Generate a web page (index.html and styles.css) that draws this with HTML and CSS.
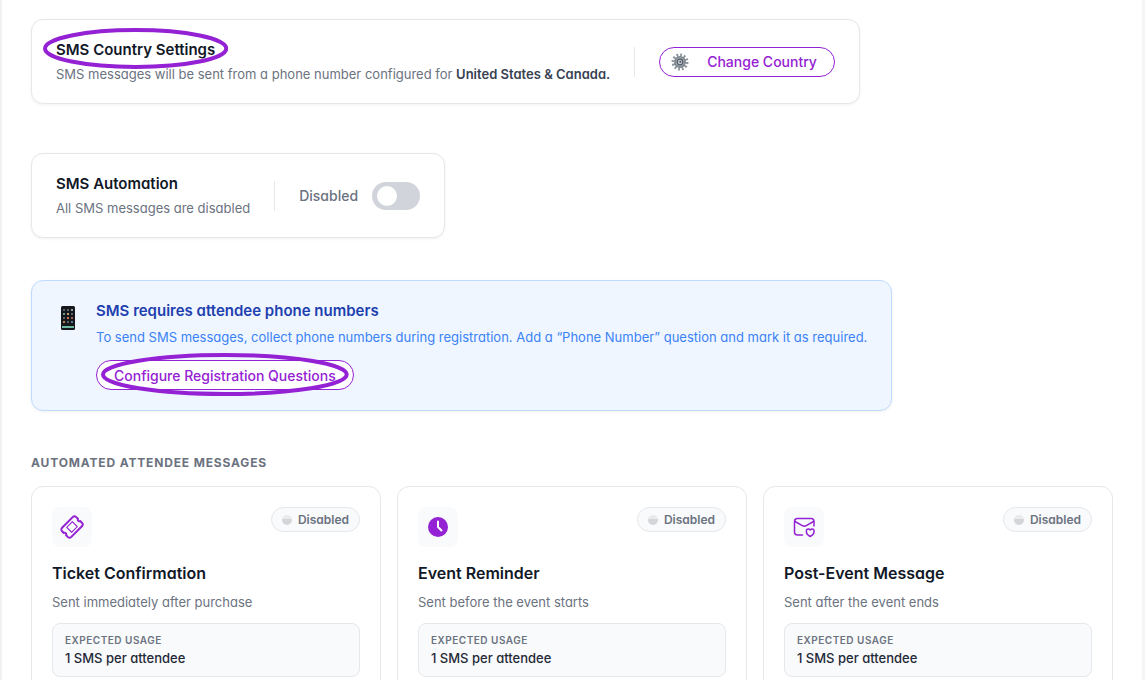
FILE: index.html
```html
<!DOCTYPE html>
<html lang="en">
  <head>
    <meta charset="UTF-8" />
    <title>SMS Settings</title>
    <link rel="stylesheet" href="styles.css">
  </head>
  <body>
    <main class="page">
      <section class="card country-card">
        <div>
          <h2 class="card-title">
            <span class="circled">SMS Country Settings
              <svg class="ring ring-title" viewBox="0 0 185 41" preserveAspectRatio="none" aria-hidden="true"><ellipse cx="92.5" cy="20.5" rx="90.5" ry="18.5" /></svg>
            </span>
          </h2>
          <p class="card-text">SMS messages will be sent from a phone number configured for <strong>United States &amp; Canada.</strong></p>
        </div>
        <div class="card-action">
          <button type="button" class="pill-btn country-btn">
            <svg class="gear" viewBox="0 0 18 18" aria-hidden="true">
              <circle cx="9" cy="9" r="7" fill="none" stroke="#8b939b" stroke-width="3" stroke-dasharray="1.8 1.86" />
              <circle cx="9" cy="9" r="5.2" fill="#a4abb2" stroke="#7d868e" stroke-width="1.6" />
              <circle cx="9" cy="9" r="2.8" fill="#c5cbd0" stroke="#545d65" stroke-width="1.2" />
              <circle cx="9.3" cy="8.7" r="1" fill="#454d55" />
            </svg>
            Change Country
          </button>
        </div>
      </section>

      <section class="card automation-card">
        <div>
          <h2 class="card-title">SMS Automation</h2>
          <p class="card-text">All SMS messages are disabled</p>
        </div>
        <div class="card-action">
          <label for="automation" class="switch-label">Disabled</label>
          <input type="checkbox" role="switch" id="automation" class="switch" />
        </div>
      </section>

      <section class="card notice">
        <svg class="phone" viewBox="0 0 16 24" aria-hidden="true">
          <rect x="1" y="0" width="14" height="24" rx="1.5" fill="#15171a" />
          <g fill="#56636b">
            <rect x="3" y="3" width="2" height="2" /><rect x="7" y="3" width="2" height="2" /><rect x="11" y="3" width="2" height="2" fill="#8fa3ad" />
            <rect x="3" y="7" width="2" height="2" fill="#6f9b8d" /><rect x="7" y="7" width="2" height="2" fill="#b9a27c" /><rect x="11" y="7" width="2" height="2" />
            <rect x="3" y="11" width="2" height="2" /><rect x="7" y="11" width="2" height="2" fill="#c9764e" /><rect x="11" y="11" width="2" height="2" fill="#a35b52" />
            <rect x="3" y="15" width="2" height="2" fill="#b7835a" /><rect x="7" y="15" width="2" height="2" /><rect x="11" y="15" width="2" height="2" fill="#5b7f9e" />
          </g>
          <rect x="2" y="20" width="12" height="2" fill="#6fb7a4" />
        </svg>
        <div>
          <h2 class="card-title">SMS requires attendee phone numbers</h2>
          <p class="card-text">To send SMS messages, collect phone numbers during registration. Add a “Phone Number” question and mark it as required.</p>
          <button type="button" class="pill-btn circled">
            Configure Registration Questions
            <svg class="ring ring-btn" viewBox="0 0 248 43" preserveAspectRatio="none" aria-hidden="true"><ellipse cx="124" cy="21.5" rx="122" ry="19.5" /></svg>
          </button>
        </div>
      </section>

      <h3 class="section-title">Automated Attendee Messages</h3>
      <div class="messages">
        <article class="message">
          <div class="message-head">
            <span class="icon-box">
              <svg viewBox="0 0 24 24" fill="none" stroke="#9421d3" stroke-linejoin="round" aria-hidden="true">
                <g transform="rotate(-45 12 12)">
                  <path stroke-width="2" d="M4.5 5.5h15a2.5 2.5 0 0 1 2.500 2.500v2.400a1.700 1.700 0 0 0 0 3.200V16a2.500 2.500 0 0 1-2.500 2.500h-15A2.500 2.500 0 0 1 2 16v-2.400a1.700 1.700 0 0 0 0-3.200V8a2.500 2.500 0 0 1 2.500-2.500z" />
                  <rect x="8" y="8.5" width="8" height="7" stroke-width="1.1" />
                </g>
              </svg>
            </span>
            <span class="badge"><i class="dot"></i>Disabled</span>
          </div>
          <h4 class="message-title">Ticket Confirmation</h4>
          <p class="message-text">Sent immediately after purchase</p>
          <div class="usage">
            <span class="usage-label">Expected usage</span>
            <span class="usage-value">1 SMS per attendee</span>
          </div>
        </article>
        <article class="message">
          <div class="message-head">
            <span class="icon-box">
              <svg viewBox="0 0 24 24" fill="none" aria-hidden="true">
                <circle cx="12" cy="12" r="10" fill="#9421d3" />
                <path d="M12 6.5V12l3.5 3.5" stroke="#fff" stroke-width="2" stroke-linecap="round" stroke-linejoin="round" />
              </svg>
            </span>
            <span class="badge"><i class="dot"></i>Disabled</span>
          </div>
          <h4 class="message-title">Event Reminder</h4>
          <p class="message-text">Sent before the event starts</p>
          <div class="usage">
            <span class="usage-label">Expected usage</span>
            <span class="usage-value">1 SMS per attendee</span>
          </div>
        </article>
        <article class="message">
          <div class="message-head">
            <span class="icon-box">
              <svg viewBox="0 0 24 24" fill="none" stroke="#9421d3" stroke-width="1.5" stroke-linecap="round" stroke-linejoin="round" aria-hidden="true">
                <path d="M10.5 20H5.5a3 3 0 0 1-3-3V6.5a3 3 0 0 1 3-3h13.500a3 3 0 0 1 3 3V11" />
                <path d="M3 6.5l7.300 4.200a4 4 0 0 0 4 0L21.5 6.5" />
                <path d="M18.2 21.5c-2.500-1.200-3.800-2.500-3.800-4.500v-1.200c0-1.100.8-1.800 1.800-1.800.8 0 1.500.3 2 .9.500-.6 1.200-.9 2-.9 1 0 1.800.7 1.800 1.800V17c0 2-1.300 3.300-3.800 4.500z" />
              </svg>
            </span>
            <span class="badge"><i class="dot"></i>Disabled</span>
          </div>
          <h4 class="message-title">Post-Event Message</h4>
          <p class="message-text">Sent after the event ends</p>
          <div class="usage">
            <span class="usage-label">Expected usage</span>
            <span class="usage-value">1 SMS per attendee</span>
          </div>
        </article>
      </div>
    </main>
  </body>
</html>
```
FILE: styles.css
```css
* {
  box-sizing: border-box;
}
html {
  overflow: hidden;
}
body {
  margin: 0;
  background-color: #fff;
  font-family: "Inter", sans-serif;
  font-feature-settings: "cv11";
  color: #111827;
}
h2,
h3,
h4,
p {
  margin: 0;
}
.page {
  display: flex;
  flex-direction: column;
  align-items: flex-start;
  min-height: 100vh;
  padding: 19px 29px 24px;
  border-left: 2px solid #f1f1f2;
  border-right: 3px solid #f5f5f6;
}
.card {
  display: flex;
  align-items: center;
  padding: 17px 24px;
  border: 1px solid #e5e7eb;
  border-radius: 12px;
  background: #fff;
  box-shadow: 0 1px 3px rgba(0, 0, 0, 0.06);
}
.card-title {
  font-size: 15px;
  font-weight: 600;
  line-height: 25px;
}
.card-text {
  font-size: 13px;
  line-height: 24px;
  color: #6b7280;
}
.card-text strong {
  font-weight: 600;
  color: #374151;
}
.card-action {
  display: flex;
  align-items: center;
  gap: 14px;
  height: 30px;
  margin-left: 24px;
  padding-left: 24px;
  border-left: 1px solid #e5e7eb;
}
.automation-card {
  margin-top: 49px;
}

/* Buttons */
.pill-btn {
  display: inline-flex;
  align-items: center;
  height: 30px;
  padding: 0 17px;
  border: 1px solid #9421d3;
  border-radius: 15px;
  background: #fff;
  font-family: inherit;
  font-size: 14px;
  font-weight: 500;
  color: #9421d3;
  white-space: nowrap;
  cursor: pointer;
}
.country-btn {
  gap: 18px;
  padding-left: 11px;
}
.gear {
  width: 18px;
  height: 18px;
}

/* Highlight rings */
.circled {
  position: relative;
}
.ring {
  position: absolute;
  fill: none;
  stroke: #9421d3;
  stroke-width: 4;
  pointer-events: none;
}
.ring-title {
  top: -12px;
  left: -13px;
  width: calc(100% + 26px);
  height: 41px;
}
.ring-btn {
  top: -8px;
  left: 4px;
  width: calc(100% - 8px);
  height: 43px;
}

/* Toggle */
.switch-label {
  font-size: 14px;
  font-weight: 500;
  color: #6b7280;
}
.switch {
  appearance: none;
  display: flex;
  align-items: center;
  width: 48px;
  height: 28px;
  margin: 0;
  padding: 0 5px;
  border-radius: 14px;
  background: #d1d5db;
  cursor: pointer;
}
.switch::before {
  content: "";
  width: 20px;
  height: 20px;
  border-radius: 50%;
  background: #fff;
}
.switch:checked {
  justify-content: flex-end;
  background: #9421d3;
}

/* Phone number notice */
.notice {
  align-items: flex-start;
  gap: 20px;
  margin-top: 42px;
  padding-bottom: 20px;
  border-color: #bfdbfe;
  background: #eff6ff;
}
.notice .card-title {
  color: #1e40af;
}
.notice .card-text {
  margin: 2px 0 11px;
  color: #3b82f6;
}
.phone {
  width: 16px;
  height: 24px;
  margin: 8px 0 0 4px;
}

/* Message cards */
.section-title {
  margin: 42px 0 13px;
  font-size: 12px;
  font-weight: 700;
  line-height: 20px;
  letter-spacing: 0.07em;
  text-transform: uppercase;
  color: #6b7280;
}
.messages {
  display: grid;
  grid-template-columns: repeat(3, 1fr);
  gap: 16px;
  width: 100%;
}
.message {
  padding: 20px;
  border: 1px solid #e5e7eb;
  border-radius: 12px;
  background: #fff;
}
.message-head {
  display: flex;
  align-items: flex-start;
  justify-content: space-between;
}
.icon-box {
  display: flex;
  align-items: center;
  justify-content: center;
  width: 40px;
  height: 40px;
  border-radius: 8px;
  background: #f9fafb;
}
.icon-box svg {
  width: 24px;
  height: 24px;
}
.badge {
  display: flex;
  align-items: center;
  gap: 6px;
  height: 25px;
  padding: 0 10px;
  border: 1px solid #e5e7eb;
  border-radius: 13px;
  background: #f9fafb;
  font-size: 12px;
  font-weight: 600;
  color: #6b7280;
}
.dot {
  width: 10px;
  height: 10px;
  border-radius: 50%;
  background: linear-gradient(#e9eaec 40%, #d3d5d8 40%);
}
.message-title {
  margin-top: 14px;
  font-size: 16px;
  font-weight: 600;
  line-height: 24px;
}
.message-text {
  margin: 7px 0 11px;
  font-size: 13px;
  line-height: 20px;
  color: #6b7280;
}
.usage {
  display: flex;
  flex-direction: column;
  padding: 7px 12px 9px;
  border: 1px solid #e5e7eb;
  border-radius: 8px;
  background: #f9fafb;
}
.usage-label {
  font-size: 10px;
  font-weight: 600;
  line-height: 18px;
  letter-spacing: 0.5px;
  text-transform: uppercase;
  color: #6b7280;
}
.usage-value {
  font-size: 13px;
  font-weight: 500;
  line-height: 18px;
  color: #1f2937;
}
```
